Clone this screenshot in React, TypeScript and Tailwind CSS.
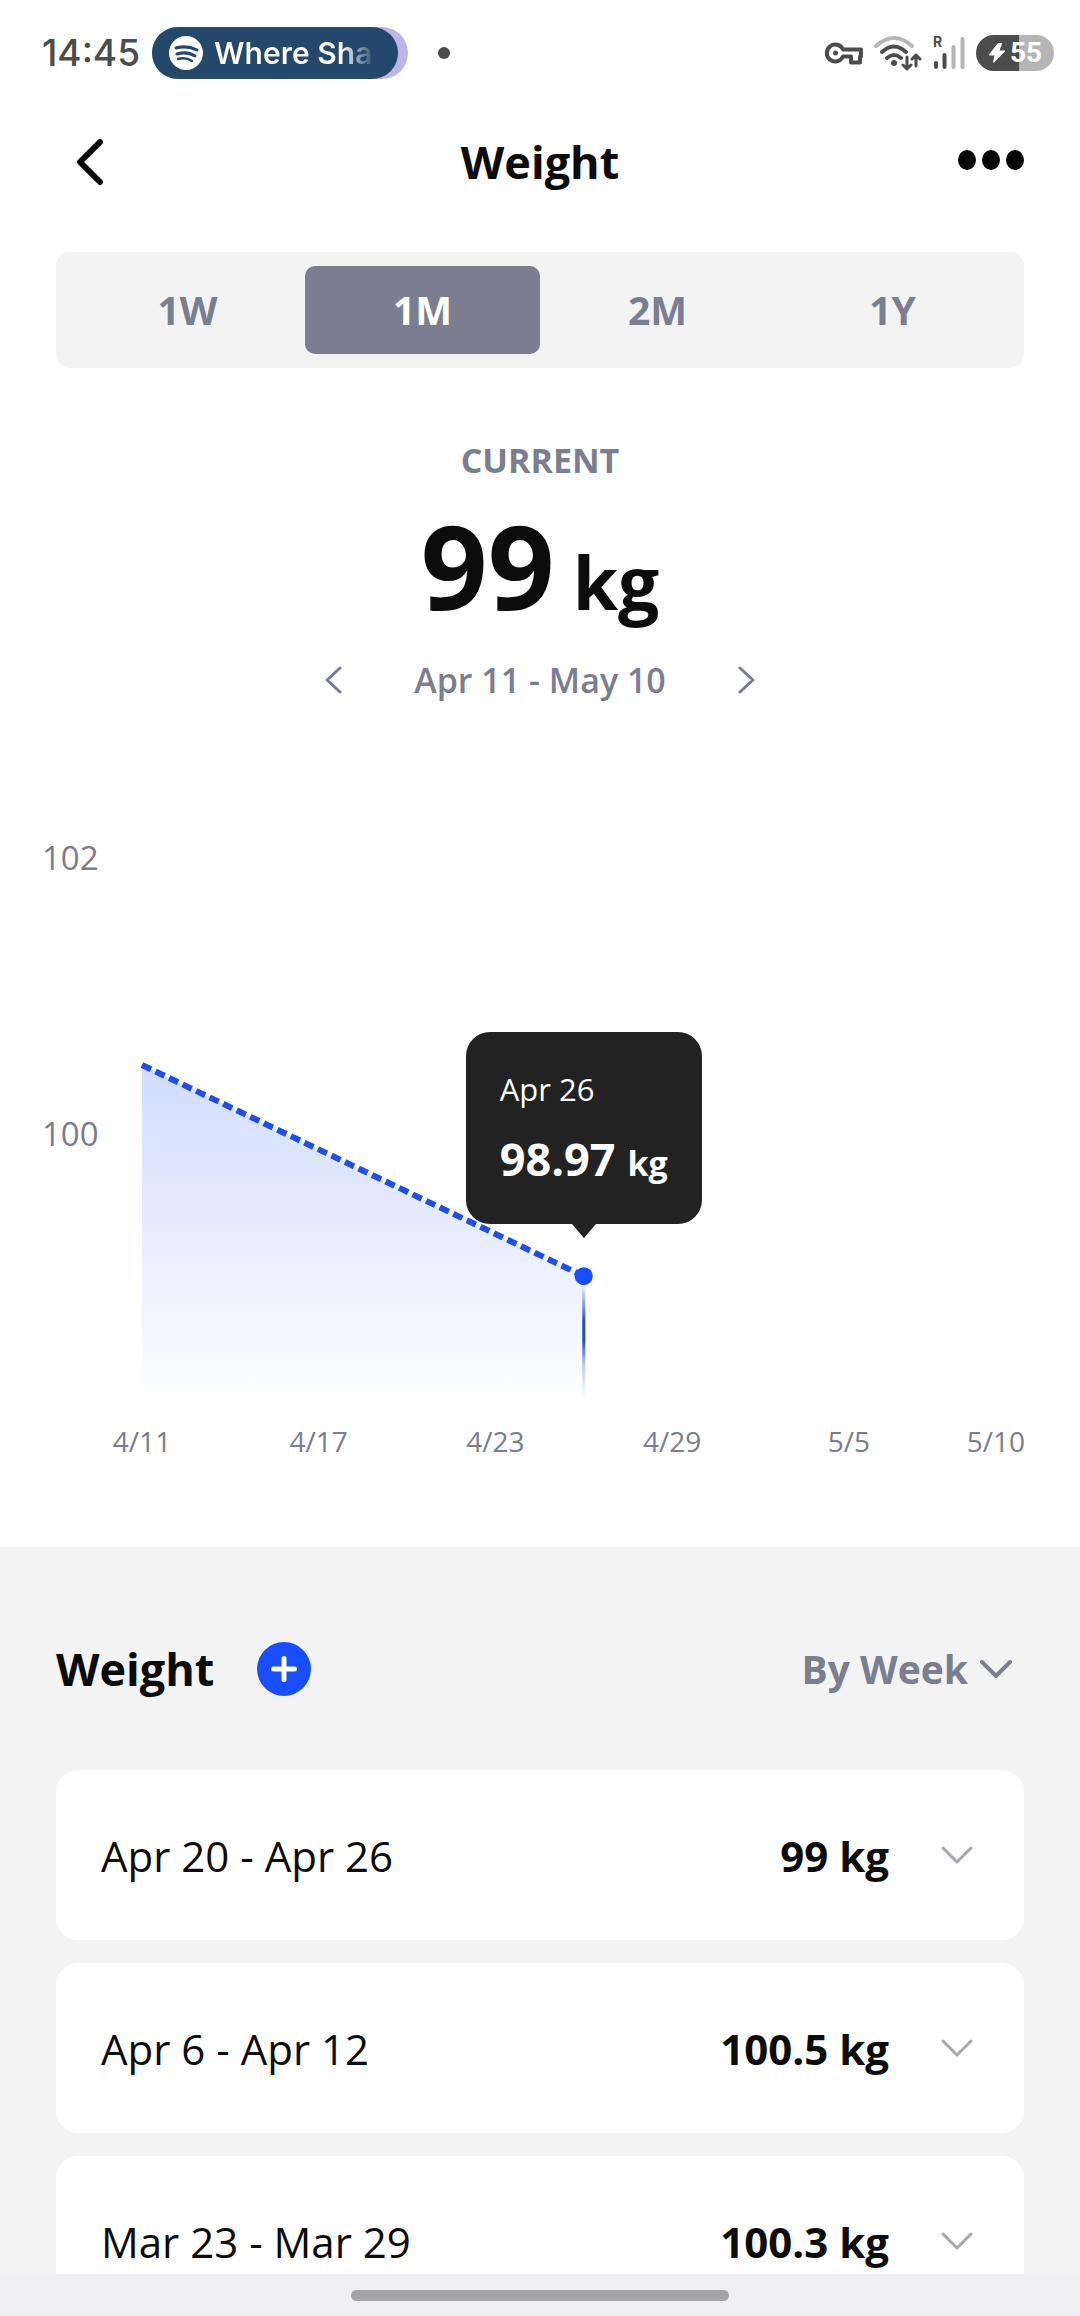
import { useState } from 'react'
import clsx from 'clsx'

type Range = '1W' | '1M' | '2M' | '1Y'

const RANGES: Range[] = ['1W', '1M', '2M', '1Y']

const ENTRIES = [
  { label: 'Apr 20 - Apr 26', value: '99 kg' },
  { label: 'Apr 6 - Apr 12', value: '100.5 kg' },
  { label: 'Mar 23 - Mar 29', value: '100.3 kg' },
]

// Chart geometry, in viewBox units
const CHART_W = 1080
const CHART_H = 680
const PLOT_LEFT = 142
const PLOT_BOTTOM = 604
const DAY_W = 29.45

const xOf = (day: number) => PLOT_LEFT + day * DAY_W
const yOf = (kg: number) => 334 + (100 - kg) * 138

const POINTS = [
  { day: 0, kg: 100.5 },
  { day: 15, kg: 98.97 },
]
const Y_TICKS = [102, 100]
const X_TICKS = [
  { day: 0, label: '4/11' },
  { day: 6, label: '4/17' },
  { day: 12, label: '4/23' },
  { day: 18, label: '4/29' },
  { day: 24, label: '5/5' },
]

export default function App() {
  const [range, setRange] = useState<Range>('1M')

  return (
    <div className="flex h-screen flex-col overflow-hidden bg-white font-['Open_Sans',sans-serif] text-[#0c0c0c]">
      <StatusBar />

      <header className="grid h-[112px] shrink-0 grid-cols-3 items-center px-14">
        <button type="button" aria-label="Back" className="justify-self-start pl-5">
          <svg width="28" height="48" viewBox="0 0 28 48" fill="none" stroke="#000" strokeWidth="6" strokeLinecap="round" strokeLinejoin="round">
            <path d="M24 4 4 24l20 20" />
          </svg>
        </button>
        <h1 className="text-center text-[45px] leading-[60px] font-bold">Weight</h1>
        <button type="button" aria-label="More options" className="justify-self-end">
          <svg width="66" height="24" viewBox="0 0 66 24" fill="#000">
            <ellipse cx="9" cy="10" rx="9" ry="10" />
            <ellipse cx="33" cy="10" rx="9" ry="10" />
            <ellipse cx="57" cy="10" rx="9" ry="10" />
          </svg>
        </button>
      </header>

      <main className="flex min-h-0 flex-1 flex-col overflow-hidden">
        <div className="mx-14 mt-[34px] grid shrink-0 grid-cols-4 rounded-[14px] bg-[#f3f3f3] p-3.5">
          {RANGES.map(r => (
            <button
              key={r}
              type="button"
              aria-pressed={r === range}
              onClick={() => setRange(r)}
              className={clsx(
                'h-[88px] rounded-[10px] text-[39px] font-bold',
                r === range ? 'bg-[#7b7d90] text-white' : 'text-[#7b7d90]',
              )}
            >
              {r}
            </button>
          ))}
        </div>

        <section className="mt-[69px] flex shrink-0 flex-col items-center">
          <h2 className="text-[34px] leading-[46px] font-bold text-[#7b7d90]">CURRENT</h2>
          <p className="flex h-[164px] items-baseline gap-[18px] font-bold">
            <span className="text-[117px] leading-[164px]">99</span>
            <span className="text-[73px] leading-[80px]">kg</span>
          </p>
          <div className="mt-2.5 flex items-center gap-[72px] text-[34px] leading-[46px] font-semibold text-[#7b7d90]">
            <button type="button" aria-label="Previous period">
              <svg width="18" height="30" viewBox="0 0 18 30" fill="none" stroke="currentColor" strokeWidth="3" strokeLinecap="round" strokeLinejoin="round">
                <path d="M16 3 3 15l13 12" />
              </svg>
            </button>
            <span>Apr 11 - May 10</span>
            <button type="button" aria-label="Next period">
              <svg width="18" height="30" viewBox="0 0 18 30" fill="none" stroke="currentColor" strokeWidth="3" strokeLinecap="round" strokeLinejoin="round">
                <path d="m2 3 13 12L2 27" />
              </svg>
            </button>
          </div>
        </section>

        <WeightChart />

        <section className="mt-[67px] shrink-0 bg-[#f3f3f3] px-14 pt-[92px]">
          <div className="flex h-[60px] items-center">
            <h2 className="text-[45px] leading-[60px] font-bold">Weight</h2>
            <button
              type="button"
              aria-label="Add weight"
              className="ml-[43px] flex size-[54px] items-center justify-center rounded-full bg-[#184eff]"
            >
              <svg width="28" height="28" viewBox="0 0 28 28" stroke="#fff" strokeWidth="5" strokeLinecap="round">
                <path d="M14 3.500v21M3.500 14h21" />
              </svg>
            </button>
            <div className="relative ml-auto text-[#7b7d90]">
              <select
                aria-label="Group entries"
                defaultValue="By Week"
                className="field-sizing-content appearance-none bg-transparent pr-14 text-[39px] leading-[54px] font-bold outline-none"
              >
                <option>By Day</option>
                <option>By Week</option>
                <option>By Month</option>
              </select>
              <span className="pointer-events-none absolute inset-y-0 right-3 flex items-center">
                <ChevronDown className="stroke-4" />
              </span>
            </div>
          </div>

          <ul className="mt-[71px] flex flex-col gap-[23px]">
            {ENTRIES.map(entry => (
              <li key={entry.label}>
                <button
                  type="button"
                  className="flex h-[170px] w-full items-center rounded-[22px] bg-white pr-[51px] pl-[45px] text-[42px]"
                >
                  <span>{entry.label}</span>
                  <span className="ml-auto font-bold">{entry.value}</span>
                  <ChevronDown className="ml-[52px] stroke-3 text-[#a7a7b2]" />
                </button>
              </li>
            ))}
          </ul>
        </section>
      </main>

      <div className="flex h-[42px] shrink-0 justify-center bg-[#f0f0f2] pt-4">
        <div className="h-[11px] w-[35%] rounded-full bg-[#a4a4a6]" />
      </div>
    </div>
  )
}

function ChevronDown({ className }: { className?: string }) {
  return (
    <svg width="32" height="22" viewBox="0 0 32 22" fill="none" stroke="currentColor" strokeLinecap="round" strokeLinejoin="round" className={className}>
      <path d="m2 4 14 14L30 4" />
    </svg>
  )
}

function WeightChart() {
  const first = POINTS[0]
  const last = POINTS[POINTS.length - 1]
  const line = POINTS.map(p => `${xOf(p.day)},${yOf(p.kg)}`).join(' ')
  const lastX = xOf(last.day)
  const lastY = yOf(last.kg)

  return (
    <div className="relative mt-[97px] shrink-0">
      <svg viewBox={`0 0 ${CHART_W} ${CHART_H}`} className="block w-full" role="img" aria-label="Weight over time">
        <defs>
          <linearGradient id="area" x1="0" y1="0" x2="0" y2="1">
            <stop offset="0" stopColor="#184eff" stopOpacity="0.2" />
            <stop offset="1" stopColor="#184eff" stopOpacity="0" />
          </linearGradient>
          <linearGradient id="marker" x1="0" y1="0" x2="0" y2="1">
            <stop offset="0" stopColor="#1f49e0" stopOpacity="0" />
            <stop offset="0.33" stopColor="#1f49e0" />
            <stop offset="0.5" stopColor="#1f49e0" />
            <stop offset="0.7" stopColor="#1f49e0" stopOpacity="0.3" />
            <stop offset="1" stopColor="#1f49e0" stopOpacity="0" />
          </linearGradient>
        </defs>

        <g className="fill-[#7b7c8c] text-[33px]">
          {Y_TICKS.map(kg => (
            <text key={kg} x="42" y={yOf(kg) + 12}>{kg}</text>
          ))}
        </g>
        <g className="fill-[#7b7c8c] text-[28px]">
          {X_TICKS.map(t => (
            <text key={t.label} x={xOf(t.day)} y="652" textAnchor="middle">{t.label}</text>
          ))}
          <text x="1025" y="652" textAnchor="end">5/10</text>
        </g>

        <polygon
          points={`${line} ${lastX},${PLOT_BOTTOM} ${xOf(first.day)},${PLOT_BOTTOM}`}
          fill="url(#area)"
        />
        <rect x={lastX - 1.5} y={lastY + 8} width="3" height={PLOT_BOTTOM - lastY - 14} fill="url(#marker)" />
        <polyline points={line} fill="none" stroke="#1f4fea" strokeWidth="6" strokeDasharray="10 5" />
        <circle cx={lastX} cy={lastY} r="9" fill="#184eff" />
      </svg>

      {/* Tooltip sits above the last point */}
      <div
        className="absolute -translate-x-1/2 -translate-y-full pb-[38px]"
        style={{ left: `${(lastX / CHART_W) * 100}%`, top: `${(lastY / CHART_H) * 100}%` }}
      >
        <div className="rounded-[24px] bg-[#222] px-[34px] pt-9 pb-[35px] whitespace-nowrap text-white">
          <div className="text-[31px] leading-[42px]">Apr 26</div>
          <div className="mt-[19px] flex items-baseline gap-3 font-bold">
            <span className="text-[45px] leading-[60px]">98.97</span>
            <span className="text-[34px] leading-[40px]">kg</span>
          </div>
        </div>
        <svg width="24" height="14" viewBox="0 0 24 14" fill="#222" className="mx-auto block">
          <path d="M0 0h24L12 14z" />
        </svg>
      </div>
    </div>
  )
}

function StatusBar() {
  return (
    <div className="flex h-[106px] shrink-0 items-center pr-[26px] pl-[42px] font-['Inter',sans-serif] text-[#4c4c4c]">
      <span className="w-[110px] text-[37px] font-medium">14:45</span>
      <div className="w-[256px] rounded-full bg-[#bdb5ea]">
        <div className="flex h-[52px] w-[246px] items-center gap-[11px] rounded-full bg-[#23486b] pl-[17px]">
          <svg width="34" height="34" viewBox="0 0 34 34" fill="none" stroke="#23486b" strokeLinecap="round">
            <circle cx="17" cy="17" r="17" fill="#fff" stroke="none" />
            <path d="M7 12q11-3 21 2" strokeWidth="3" />
            <path d="M8 18q10-3 18 2" strokeWidth="3" />
            <path d="M9 23q8-2 14 2" strokeWidth="2.5" />
          </svg>
          <span className="bg-linear-to-r from-white from-80% to-white/10 bg-clip-text text-[30px] font-semibold whitespace-nowrap text-transparent">
            Where Sha
          </span>
        </div>
      </div>
      <span className="ml-[30px] size-3 rounded-full bg-[#4c4c4c]" />

      <div className="ml-auto flex items-center">
        {/* VPN key */}
        <svg width="38" height="24" viewBox="0 0 38 24" fill="none" stroke="#4c4c4c" strokeWidth="4" strokeLinejoin="round">
          <path d="M18 8.500h18v7h-1v6h-9v-6h-8a8.500 8.500 0 1 1 0-7z" />
          <circle cx="10.500" cy="12" r="2.500" fill="#4c4c4c" stroke="none" />
        </svg>
        {/* Wi-Fi with traffic arrows */}
        <svg width="50" height="36" viewBox="0 0 50 36" fill="none" stroke="#4c4c4c" strokeWidth="4" strokeLinecap="round" className="ml-[10px]">
          <path d="M3 11q18-16 36 0" stroke="#b5b5b5" />
          <path d="M9 17q12-11 24 0M14 23q7-6 14 0" />
          <circle cx="21" cy="28" r="3" fill="#4c4c4c" stroke="none" />
          <path d="M34 22v12m-4-4 4 4 4-4M43 31V20m-4 4 4-4 4 4" strokeWidth="3" strokeLinejoin="round" />
        </svg>
        <div className="relative ml-[10px] h-[34px]">
          <svg width="32" height="34" viewBox="0 0 32 34" strokeWidth="4" strokeLinecap="round">
            <path d="M3 27v4M11.500 19v12" stroke="#4c4c4c" />
            <path d="M20.500 11v20M29.500 3v28" stroke="#b5b5b5" />
          </svg>
          <span className="absolute top-0 left-0 text-[14px] leading-[12px] font-bold">R</span>
        </div>
        <div className="ml-[11px] flex h-9 w-[78px] items-center justify-center gap-1 rounded-full bg-linear-to-r from-[#4c4c4c] from-55% to-[#b5b5b5] to-55% font-['Roboto',sans-serif] text-[28px] font-bold text-white">
          <svg width="18" height="20" viewBox="0 0 18 20" fill="#fff">
            <path d="M10 0 1 11.500q-.5 1 .5 1h5L5 19q0 1 1 .5L17 8.500q.5-1-.5-1h-5L14 1q0-1-1-1z" />
          </svg>
          55
        </div>
      </div>
    </div>
  )
}
